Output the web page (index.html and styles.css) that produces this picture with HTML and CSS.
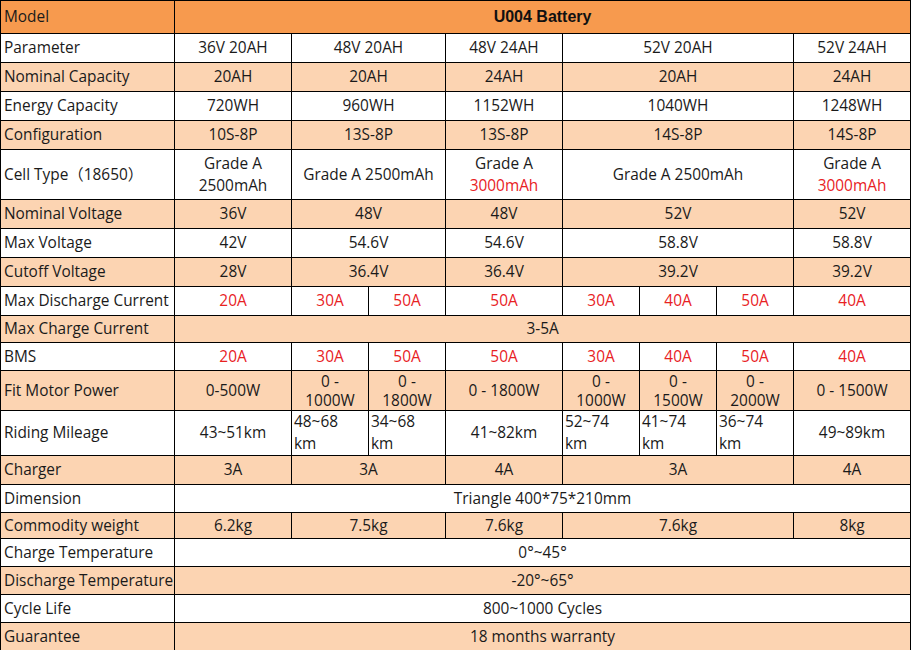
FILE: index.html
```html
<!DOCTYPE html>
<html>
<head>
<meta charset="utf-8">
<link rel="stylesheet" href="styles.css">
</head>
<body>
<table class="spec">
  <colgroup>
    <col class="c-label"><col class="c-wide"><col class="c-narrow"><col class="c-narrow"><col class="c-wide"><col class="c-narrow"><col class="c-narrow"><col class="c-narrow"><col class="c-wide">
  </colgroup>
  <tbody>
    <tr class="head r33"><td class="lbl">Model</td><td colspan="8" class="title">U004 Battery</td></tr>
    <tr class="w r29"><td class="lbl">Parameter</td><td>36V 20AH</td><td colspan="2">48V 20AH</td><td>48V 24AH</td><td colspan="3">52V 20AH</td><td>52V 24AH</td></tr>
    <tr class="o r29"><td class="lbl">Nominal Capacity</td><td>20AH</td><td colspan="2">20AH</td><td>24AH</td><td colspan="3">20AH</td><td>24AH</td></tr>
    <tr class="w r29"><td class="lbl">Energy Capacity</td><td>720WH</td><td colspan="2">960WH</td><td>1152WH</td><td colspan="3">1040WH</td><td>1248WH</td></tr>
    <tr class="o r29"><td class="lbl">Configuration</td><td>10S-8P</td><td colspan="2">13S-8P</td><td>13S-8P</td><td colspan="3">14S-8P</td><td>14S-8P</td></tr>
    <tr class="w r50"><td class="lbl">Cell Type（18650）</td><td>Grade A<br>2500mAh</td><td colspan="2">Grade A 2500mAh</td><td>Grade A<br><span class="red">3000mAh</span></td><td colspan="3">Grade A 2500mAh</td><td>Grade A<br><span class="red">3000mAh</span></td></tr>
    <tr class="o r29"><td class="lbl">Nominal Voltage</td><td>36V</td><td colspan="2">48V</td><td>48V</td><td colspan="3">52V</td><td>52V</td></tr>
    <tr class="w r29"><td class="lbl">Max Voltage</td><td>42V</td><td colspan="2">54.6V</td><td>54.6V</td><td colspan="3">58.8V</td><td>58.8V</td></tr>
    <tr class="o r29"><td class="lbl">Cutoff Voltage</td><td>28V</td><td colspan="2">36.4V</td><td>36.4V</td><td colspan="3">39.2V</td><td>39.2V</td></tr>
    <tr class="w r29 hot"><td class="lbl">Max Discharge Current</td><td>20A</td><td>30A</td><td>50A</td><td>50A</td><td>30A</td><td>40A</td><td>50A</td><td>40A</td></tr>
    <tr class="o r27"><td class="lbl">Max Charge Current</td><td colspan="8">3-5A</td></tr>
    <tr class="w r28 hot"><td class="lbl">BMS</td><td>20A</td><td>30A</td><td>50A</td><td>50A</td><td>30A</td><td>40A</td><td>50A</td><td>40A</td></tr>
    <tr class="o r40"><td class="lbl">Fit Motor Power</td><td>0-500W</td><td class="tight">0 -<br>1000W</td><td class="tight">0 -<br>1800W</td><td>0 - 1800W</td><td class="tight">0 -<br>1000W</td><td class="tight">0 -<br>1500W</td><td class="tight">0 -<br>2000W</td><td>0 - 1500W</td></tr>
    <tr class="w r44"><td class="lbl">Riding Mileage</td><td>43~51km</td><td class="tl">48~68<br>km</td><td class="tl">34~68<br>km</td><td>41~82km</td><td class="tl">52~74<br>km</td><td class="tl">41~74<br>km</td><td class="tl">36~74<br>km</td><td>49~89km</td></tr>
    <tr class="o r29"><td class="lbl">Charger</td><td>3A</td><td colspan="2">3A</td><td>4A</td><td colspan="3">3A</td><td>4A</td></tr>
    <tr class="w r28"><td class="lbl">Dimension</td><td colspan="8">Triangle 400*75*210mm</td></tr>
    <tr class="o r26"><td class="lbl">Commodity weight</td><td>6.2kg</td><td colspan="2">7.5kg</td><td>7.6kg</td><td colspan="3">7.6kg</td><td>8kg</td></tr>
    <tr class="w r28"><td class="lbl">Charge Temperature</td><td colspan="8">0°~45°</td></tr>
    <tr class="o r28"><td class="lbl">Discharge Temperature</td><td colspan="8">-20°~65°</td></tr>
    <tr class="w r28"><td class="lbl">Cycle Life</td><td colspan="8">800~1000 Cycles</td></tr>
    <tr class="o r28"><td class="lbl">Guarantee</td><td colspan="8">18 months warranty</td></tr>
  </tbody>
</table>
</body>
</html>
```
FILE: styles.css
```css
html, body {
  margin: 0;
  padding: 0;
  background: #ffffff;
}

.spec {
  border-collapse: collapse;
  table-layout: fixed;
  width: 910px;
  font-family: "Open Sans", "Noto Sans CJK SC", sans-serif;
  font-size: 15.4px;
  color: #1a1a1a;
}

.c-label { width: 174px; }
.c-wide { width: 117px; }
.c-narrow { width: 77px; }

.spec td {
  border: 1px solid #000;
  padding: 0 1px;
  text-align: center;
  vertical-align: middle;
  line-height: 22px;
  white-space: nowrap;
  overflow: hidden;
}

.spec td.lbl {
  text-align: left;
  padding-left: 3px;
  padding-right: 0;
}

.head td { background: #f79a4e; }
.o td { background: #fcd4b2; }
.w td { background: #ffffff; }

.spec td.title {
  font-family: "Liberation Sans", Arial, sans-serif;
  font-weight: bold;
  font-size: 16px;
  color: #111;
}

.hot td:not(.lbl), .red { color: #e8221f; }

.spec td.tl {
  text-align: left;
  vertical-align: top;
  padding-left: 2px;
}

.spec td.tight {
  line-height: 19px;
  padding-top: 1px;
}

.r26 { height: 26px; }
.r27 { height: 27px; }
.r28 { height: 28px; }
.r29 { height: 29px; }
.r33 { height: 33px; }
.r40 { height: 40px; }
.r44 { height: 44px; }
.r50 { height: 50px; }
```
